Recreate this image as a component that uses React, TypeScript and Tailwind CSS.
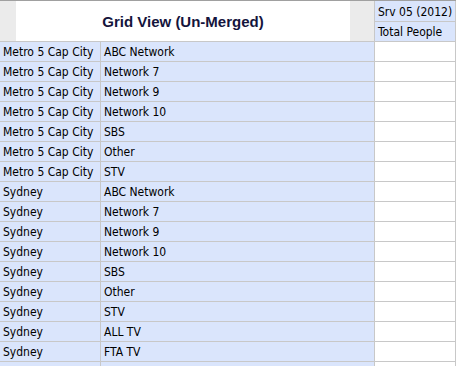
const rows: [string, string][] = [
  ['Metro 5 Cap City', 'ABC Network'],
  ['Metro 5 Cap City', 'Network 7'],
  ['Metro 5 Cap City', 'Network 9'],
  ['Metro 5 Cap City', 'Network 10'],
  ['Metro 5 Cap City', 'SBS'],
  ['Metro 5 Cap City', 'Other'],
  ['Metro 5 Cap City', 'STV'],
  ['Sydney', 'ABC Network'],
  ['Sydney', 'Network 7'],
  ['Sydney', 'Network 9'],
  ['Sydney', 'Network 10'],
  ['Sydney', 'SBS'],
  ['Sydney', 'Other'],
  ['Sydney', 'STV'],
  ['Sydney', 'ALL TV'],
  ['Sydney', 'FTA TV'],
  ['', ''],
];

export default function App() {
  return (
    <div className="w-[465px] h-[366px] overflow-hidden bg-white font-['DejaVu_Sans_Condensed','DejaVu_Sans',sans-serif] text-[12px] leading-[14px] text-black">
      <div className="w-[456px] border-t border-[#a0a0a0]">
        <div className="flex h-[41px] border-b border-[#c8c8c8]">
          <div className="w-[16px] bg-[#ebebeb]" />
          <div className="w-[334px] bg-white flex items-center justify-center pt-[2px] font-['Liberation_Sans',Arial,sans-serif] font-bold text-[15px] text-[#14143c]">
            Grid View (Un-Merged)
          </div>
          <div className="w-[24px] bg-[#ebebeb]" />
          <div className="w-[82px] flex flex-col border-l border-r border-[#c8c8c8]">
            <div className="h-[21px] border-b border-[#c8c8c8] bg-[#dae5fc] flex items-center pt-[1px] pl-[3px] whitespace-nowrap">
              Srv 05 (2012)
            </div>
            <div className="flex-1 bg-[#dae5fc] flex items-center pt-[1px] pl-[3px] whitespace-nowrap">Total People</div>
          </div>
        </div>
        {rows.map(([city, net], i) => (
          <div key={i} className="flex h-[20px] border-b border-[#c8c8c8]">
            <div className="w-[101px] border-r border-[#c8c8c8] bg-[#dae5fc] flex items-center pt-[1px] pl-[3px] whitespace-nowrap overflow-hidden">
              {city}
            </div>
            <div className="w-[274px] border-r border-[#c8c8c8] bg-[#dae5fc] flex items-center pt-[1px] pl-[3px]">
              {net}
            </div>
            <div className="w-[81px] border-r border-[#c8c8c8] bg-white" />
          </div>
        ))}
      </div>
    </div>
  );
}
